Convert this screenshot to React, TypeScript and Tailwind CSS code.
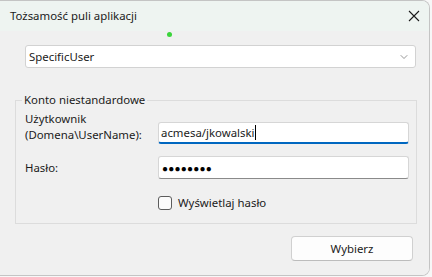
import { ChevronDown } from 'lucide-react'

const font = { fontFamily: '"Noto Sans", "Liberation Sans", sans-serif' }

export default function App() {
  return (
    <div className="h-[277px] w-[432px] bg-[#f7f7f7] text-[11.4px] leading-[16px] text-[#1b1b1b]" style={font}>
      <div className="relative flex h-[276px] w-[430px] flex-col overflow-hidden rounded-tr-[8px] rounded-br-[8px] border-t border-r border-b border-[#c4c4c4]">
        <div className="flex h-[30px] items-center justify-between bg-[#eef4f1] pl-[10px] pr-[8px]">
          <span>Tożsamość puli aplikacji</span>
          <svg width="12" height="12" viewBox="0 0 12 12" className="mr-[1px]">
            <path d="M1 1 L11 11 M11 1 L1 11" stroke="#1b1b1b" strokeWidth="1.1" />
          </svg>
        </div>
        <span className="absolute left-[167px] top-[31px] h-[5px] w-[5px] rounded-full bg-[#3bd43b]" />
        <div className="flex flex-1 flex-col bg-[#f0f0f0] pt-[14px]">
          <div className="ml-[25px] flex h-[23px] w-[391px] items-center justify-between rounded-[3px] border border-[#d2d2d2] bg-white pl-[3px] pr-[5px]">
            <span>SpecificUser</span>
            <ChevronDown size={12} strokeWidth={1.4} color="#6a6a6a" />
          </div>

          <fieldset className="ml-[15px] mt-[24px] w-[402px] border border-[#dcdcdc] pb-[12px]">
            <legend className="ml-[6px] px-[2px]">Konto niestandardowe</legend>
            <div className="flex items-start pt-[3px]">
              <div className="w-[142px] pl-[9px]">
                <div>Użytkownik</div>
                <div>(Domena\UserName):</div>
              </div>
              <div className="mt-[11px] flex h-[22px] w-[251px] items-center rounded-[3px] border border-[#d6d6d6] border-b-2 border-b-[#0067c0] bg-white pl-[2px]">
                <span>acmesa/jkowalski</span>
                <span className="ml-[1px] h-[15px] border-l border-black" />
              </div>
            </div>
            <div className="mt-[12px] flex items-center">
              <div className="w-[142px] pl-[9px]">Hasło:</div>
              <div className="flex h-[23px] w-[251px] items-center rounded-[3px] border border-[#d6d6d6] border-b-[#8a8a8a] bg-white pl-[3px]">
                <span className="text-[10px] tracking-[0.2px] text-black">●●●●●●●●</span>
              </div>
            </div>
            <div className="ml-[142px] mt-[16px] flex items-center gap-[6px]">
              <span className="h-[14px] w-[14px] rounded-[3px] border border-[#5c5c5c] bg-[#fbfbfb]" />
              <span>Wyświetlaj hasło</span>
            </div>
          </fieldset>

          <button
            type="button"
            className="ml-[291px] mt-[12px] flex h-[25px] w-[122px] items-center justify-center rounded-[4px] border border-[#d0d0d0] border-b-[#bcbcbc] bg-[#fdfdfd]"
          >
            Wybierz
          </button>
        </div>
      </div>
    </div>
  )
}
